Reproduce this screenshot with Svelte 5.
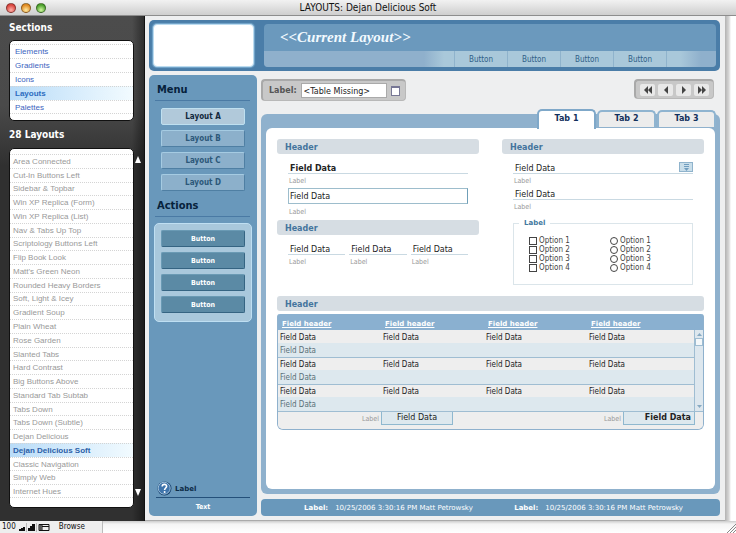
<script>
  const sections = ['Elements', 'Gradients', 'Icons', 'Layouts', 'Palettes'];
  const layouts = [
    'Area Connected', 'Cut-In Buttons Left', 'Sidebar & Topbar', 'Win XP Replica (Form)',
    'Win XP Replica (List)', 'Nav & Tabs Up Top', 'Scriptology Buttons Left', 'Flip Book Look',
    "Matt's Green Neon", 'Rounded Heavy Borders', 'Soft, Light & Icey', 'Gradient Soup',
    'Plain Wheat', 'Rose Garden', 'Slanted Tabs', 'Hard Contrast', 'Big Buttons Above',
    'Standard Tab Subtab', 'Tabs Down', 'Tabs Down (Subtle)', 'Dejan Delicious',
    'Dejan Delicious Soft', 'Classic Navigation', 'Simply Web', 'Internet Hues'
  ];
  const menu = ['Layout A', 'Layout B', 'Layout C', 'Layout D'];
  const four = [1, 2, 3, 4];
  const stamp = '10/25/2006 3:30:16 PM Matt Petrowsky';
  const nav = [
    { name: 'First', d: 'M5 0v8L1 4zM9 0v8L5 4z' },
    { name: 'Previous', d: 'M7 0v8L3 4z' },
    { name: 'Next', d: 'M3 0v8l4-4z' },
    { name: 'Last', d: 'M1 0v8l4-4zM5 0v8l4-4z' }
  ];
  let section = $state('Layouts');
  let layout = $state('Dejan Delicious Soft');
  let menuItem = $state('Layout A');
  let tab = $state(1);
</script>

<div class="window">
  <header class="titlebar">
    <div class="lights"><i class="red"></i><i class="amber"></i><i class="green"></i></div>
    <h1>LAYOUTS: Dejan Delicious Soft</h1>
  </header>

  <div class="work">
    <aside class="library">
      <h2>Sections</h2>
      <nav class="list sections" aria-label="Sections">
        {#each sections as s}
          <a href="#section" class:current={s === section} onclick={() => (section = s)}>{s}</a>
        {/each}
      </nav>
      <h2>28 Layouts</h2>
      <div class="scroller">
        <nav class="list layouts" aria-label="Layouts">
          {#each layouts as l}
            <a href="#layout" class:current={l === layout} onclick={() => (layout = l)}>{l}</a>
          {/each}
        </nav>
        <div class="arrows">
          <button aria-label="Scroll up"><svg width="6" height="7"><path d="M3 0l3 7H0z" fill="#fff" /></svg></button>
          <button aria-label="Scroll down"><svg width="6" height="7"><path d="M3 7l3-7H0z" fill="#fff" /></svg></button>
        </div>
      </div>
    </aside>

    <main class="canvas">
      <header class="banner">
        <div class="logo"></div>
        <div class="heading">
          <h2>&lt;&lt;Current Layout&gt;&gt;</h2>
          <div class="links">
            <div class="strip">
              {#each four as n}<button>Button</button>{/each}
            </div>
          </div>
        </div>
      </header>

      <aside class="side">
        <h3>Menu</h3>
        <div class="stack menu">
          {#each menu as m}
            <button class:current={m === menuItem} onclick={() => (menuItem = m)}>{m}</button>
          {/each}
        </div>
        <h3>Actions</h3>
        <div class="stack actions">
          {#each four as n}<button>Button</button>{/each}
        </div>
        <div class="help">
          <svg width="15" height="15" viewBox="0 0 15 15">
            <circle cx="7.5" cy="7.5" r="7" fill="#14406e" />
            <circle cx="7.2" cy="7.2" r="6" fill="#3f74ab" stroke="#b9d6ea" stroke-width=".8" />
            <path d="M5.2 5.6c0-3 4.6-2.8 4.4-.2-.1 1.600-2 1.700-2 3.500" fill="none" stroke="#fff" stroke-width="1.600" />
            <circle cx="7.600" cy="11" r="1" fill="#fff" />
          </svg>
          <span>Label</span>
        </div>
        <p class="note">Text</p>
      </aside>

      <section class="content">
        <div class="toolbar">
          <div class="well picker">
            <label for="table">Label:</label>
            <input id="table" value="<Table Missing>" />
            <button aria-label="Choose table"></button>
          </div>
          <div class="well pager">
            {#each nav as b}
              <button aria-label={b.name}><svg width="10" height="8" viewBox="0 0 10 8"><path d={b.d} fill="#444" /></svg></button>
            {/each}
          </div>
        </div>

        <div class="tabs" role="tablist">
          {#each [1, 2, 3] as t}
            <button role="tab" aria-selected={tab === t} class:current={tab === t} onclick={() => (tab = t)}>Tab {t}</button>
          {/each}
        </div>

        <div class="frame">
          <div class="sheet">
            <div class="columns">
              <div>
                <h4>Header</h4>
                <div class="fields">
                  <div class="field"><input id="f1" class="strong" value="Field Data" /><label for="f1">Label</label></div>
                  <div class="field boxed"><input id="f2" value="Field Data" /><label for="f2">Label</label></div>
                </div>
                <h4>Header</h4>
                <div class="fields trio">
                  {#each [1, 2, 3] as n}
                    <div class="field"><input id="t{n}" value="Field Data" /><label for="t{n}">Label</label></div>
                  {/each}
                </div>
              </div>
              <div>
                <h4>Header</h4>
                <div class="fields">
                  <div class="field">
                    <div class="combo">
                      <input id="f3" value="Field Data" />
                      <button aria-label="Show values">
                        <svg width="7" height="7" viewBox="0 0 7 7"><path d="M1 .5h5M1 2.500h5" stroke="#6f9dbf" /><path d="M1 4h5L3.500 7z" fill="#6f9dbf" /></svg>
                      </button>
                    </div>
                    <label for="f3">Label</label>
                  </div>
                  <div class="field"><input id="f4" value="Field Data" /><label for="f4">Label</label></div>
                  <fieldset>
                    <legend>Label</legend>
                    <div class="options">
                      {#each four as n}<label><input type="checkbox" />Option {n}</label>{/each}
                    </div>
                    <div class="options">
                      {#each four as n}<label><input type="radio" name="option" />Option {n}</label>{/each}
                    </div>
                  </fieldset>
                </div>
              </div>
            </div>

            <h4 class="wide">Header</h4>
            <div class="portal">
              <table>
                <thead>
                  <tr>{#each four as n}<th><a href="#sort">Field header</a></th>{/each}</tr>
                </thead>
                <tbody>
                  {#each [1, 2, 3] as r}
                    <tr>{#each four as n}<td>Field Data</td>{/each}</tr>
                    <tr class="sub"><td colspan="4">Field Data</td></tr>
                  {/each}
                </tbody>
              </table>
              <div class="bar">
                <button aria-label="Rows up"><svg width="5" height="3"><path d="M0 3h5L2.500 0z" fill="#86a9c2" /></svg></button>
                <i></i>
                <button aria-label="Rows down"><svg width="5" height="3"><path d="M0 0h5L2.500 3z" fill="#86a9c2" /></svg></button>
              </div>
              <div class="totals">
                <label for="sum1">Label</label><input id="sum1" value="Field Data" />
                <label for="sum2">Label</label><input id="sum2" class="strong" value="Field Data" />
              </div>
            </div>
          </div>
        </div>

        <footer class="stamps">
          <span><b>Label:</b>{stamp}</span>
          <span><b>Label:</b>{stamp}</span>
        </footer>
      </section>
    </main>
    <div class="gutter"></div>
  </div>

  <footer class="status">
    <span class="zoom">100</span>
    <svg width="31" height="9" viewBox="0 0 31 9">
      <path d="M0 8V6h2V5h2V4h2v4zM9 8V5h2V3h2V1h3v7z" fill="#111" />
      <path d="M7.500 0v9M17.500 0v9" stroke="#bbb" />
      <path d="M20 1.500h10v6H20zM23 1v7M23 3.500h7" fill="none" stroke="#111" />
      <path d="M20 2h3v5h-3z" fill="#555" />
    </svg>
    <span class="mode">Browse</span>
    <div class="track">
      <svg width="9" height="9"><path d="M0 9L9 0M3 9l6-6M6 9l3-3" stroke="#888" /></svg>
    </div>
  </footer>
</div>

<style>
  :global(body) { background: #fff; }
  .window, .window * { box-sizing: border-box; margin: 0; }
  .window {
    display: flex;
    flex-direction: column;
    min-height: 100vh;
    font: 8px/10px "DejaVu Sans", Verdana, sans-serif;
    color: #222;
  }
  button, input { font: inherit; color: inherit; padding: 0; border: 0; background: none; border-radius: 0; min-width: 0; }
  button { display: flex; align-items: center; justify-content: center; }
  a { color: inherit; text-decoration: none; }
  svg { display: block; flex: none; }

  .titlebar {
    display: grid;
    grid-template-columns: 1fr auto 1fr;
    align-items: center;
    height: 16px;
    padding: 0 6px;
    border-bottom: 1px solid #8d8d8d;
    background: linear-gradient(#f2f2f2, #cecece);
  }
  .titlebar h1 { font: 10px/14px "DejaVu Sans Condensed", "DejaVu Sans", sans-serif; color: #111; }
  .lights { display: flex; gap: 5px; }
  .lights i { width: 10px; height: 10px; border-radius: 50%; border: 1px solid #00000066; }
  .red { background: radial-gradient(circle at 50% 75%, #ffb0a8, #d9463f 70%); }
  .amber { background: radial-gradient(circle at 50% 75%, #ffeaa0, #e08a22 70%); }
  .green { background: radial-gradient(circle at 50% 75%, #d2f8a0, #4ba02c 70%); }

  .work { flex: 1; display: flex; }
  .library {
    width: 145px;
    display: flex;
    flex-direction: column;
    padding: 4px 1px 13px 9px;
    border-right: 1px solid #111;
    background: linear-gradient(90deg, transparent 132px, #0006), linear-gradient(#4c4c4c 0, #4a4a4a 90px, #303030 150px, #303030);
  }
  .library h2 { font: bold 10px/16px "DejaVu Sans Condensed", "DejaVu Sans", sans-serif; color: #fff; }
  .list { width: 125px; display: grid; background: #fff; border: 1px solid #111; border-radius: 5px; font: 8px/10px "Liberation Sans", Arial, sans-serif; }
  .list a { display: flex; align-items: center; padding-top: 1px; border-top: 1px dotted #d4d4d4; }
  .list a:last-child { border-bottom: 1px dotted #d4d4d4; }
  .list .current { font-weight: bold; background: linear-gradient(90deg, #b9dcf8, #f2fbff); }
  .sections { margin: 4px 0 6px; padding: 3px 0 6px; grid-auto-rows: 14px; color: #3c64c0; }
  .sections a { padding-left: 5px; }
  .sections .current { color: #2c6cc0; }
  .scroller { flex: 1; display: flex; margin-top: 5px; gap: 1px; }
  .layouts { grid-auto-rows: 1fr; padding: 5px 0 9px; color: #999; }
  .layouts a { padding-left: 3px; }
  .layouts .current { color: #2c5fa8; }
  .arrows { display: flex; flex-direction: column; justify-content: space-between; padding: 8px 0 12px; }

  .canvas {
    flex: 1;
    min-width: 0;
    display: grid;
    grid-template-columns: 108px 1fr;
    grid-template-rows: 51px 1fr;
    gap: 4px;
    padding: 4px 5px 4px 4px;
    background: #eeeff0;
    border-bottom: 1px solid #aaa;
  }
  .gutter { width: 11px; background: linear-gradient(90deg, #b2b2b2, #d8d8d8 4px, #fff 6px); }

  .banner { grid-column: 1 / -1; display: flex; gap: 10px; padding: 4px; background: #4a7da8; border-radius: 5px; }
  .logo { width: 101px; background: #fff; border: 1px solid #bcdcf0; border-radius: 4px; box-shadow: 0 0 1px 1px #76a8cc; }
  .heading { flex: 1; display: flex; flex-direction: column; border-radius: 4px; overflow: hidden; background: #6b99bd; }
  .heading h2 { flex: 1; padding-left: 16px; font: italic bold 15px/27px "Liberation Serif", "Times New Roman", serif; color: #f2faff; }
  .links { display: flex; justify-content: flex-end; height: 18px; padding-right: 15px; background: #8fb0cc; }
  .strip { display: flex; padding: 0 34px 0 30px; background: linear-gradient(90deg, #8fb0cc, #a9c8da 20px, #a9c8da 256px, #8fb0cc); }
  .strip button { width: 53px; padding-top: 1px; border-left: 1px solid #8fb3cc; font: 8px/10px "DejaVu Sans Condensed", "DejaVu Sans", sans-serif; color: #2f5f88; }
  .strip button:last-child { width: 54px; border-right: 1px solid #8fb3cc; }

  .side { display: flex; flex-direction: column; padding: 7px 5px 4px; background: #6998bb; border-radius: 5px; }
  .side h3 { margin: 0 2px 0 1px; padding: 0 2px 2px; border-bottom: 1px solid #4a7aa4; font: bold 11px/16px "DejaVu Sans Condensed", "DejaVu Sans", sans-serif; color: #06223c; }
  .stack { display: flex; flex-direction: column; gap: 5px; padding: 7px; font: bold 8px/10px "DejaVu Sans Condensed", "DejaVu Sans", sans-serif; }
  .stack button { height: 17px; border-radius: 2px; }
  .menu button { background: #8cb0cb; color: #2d5879; border: 1px solid #a5cbe2; border-right-color: #4f7fa3; border-bottom-color: #4f7fa3; }
  .menu .current { background: #b1c9da; border-color: #bfe0f0; color: #12283c; }
  .actions { margin-top: 6px; padding: 6px 6px 8px; background: #a9c8dc; border: 1px solid #bfdff2; border-radius: 5px; }
  .actions button { background: #5b8aa5; color: #fff; font-size: 7px; border: 1px solid #6a9ab4; border-right-color: #356482; border-bottom-color: #356482; }
  .help { display: flex; align-items: center; gap: 3px; margin: auto 2px 0 2px; padding: 0 1px 1px; border-bottom: 1px solid #24507a; font: bold 7px/10px "DejaVu Sans", sans-serif; color: #0c2b48; }
  .note { padding-top: 4px; text-align: center; font: bold 7px/10px "DejaVu Sans Condensed", "DejaVu Sans", sans-serif; color: #fff; }

  .content { display: flex; flex-direction: column; min-width: 0; }
  .toolbar { display: flex; justify-content: space-between; align-items: flex-start; margin: 4px 6px 0 0; }
  .well { display: flex; align-items: center; background: #c8c8c8; border: 1px solid #b8b8b8; border-top: 2px solid #a9a9a9; border-left: 2px solid #a9a9a9; border-radius: 4px; }
  .picker { height: 22px; width: 145px; padding: 0 5px; gap: 4px; }
  .picker label { padding: 1px 0 0 1px; font-weight: bold; color: #555; }
  .picker input { flex: 1; height: 15px; padding: 1px 0 0 2px; background: #fff; border: 1px solid #aaa; }
  .picker button { width: 9px; height: 10px; background: #fff; border: 1px solid #777795; border-top-width: 2px; }
  .pager { height: 20px; padding: 0 4px; gap: 3px; }
  .pager button { width: 15px; height: 12px; background: #e8e8e8; border-radius: 2px; }

  .tabs { display: flex; justify-content: flex-end; align-items: flex-end; height: 27px; padding-right: 4px; gap: 1px; z-index: 1; margin-bottom: -19px; position: relative; align-self: flex-end; }
  .tabs button { width: 59px; height: 17px; margin-bottom: 1px; padding-bottom: 1px; background: #ececec; border: 2px solid #8fb4d0; border-bottom: 0; border-radius: 5px 5px 0 0; font-weight: bold; color: #12305c; }
  .tabs .current { height: 20px; margin-bottom: -1px; padding-bottom: 3px; background: #fff; border-color: #7fa8c9; }
  .frame { flex: 1; display: flex; margin-top: 5px; padding: 14px 5px 5px; background: #8fb1cd; border-radius: 6px; }
  .sheet { flex: 1; min-width: 0; padding: 11px; background: #fff; border-radius: 6px; }

  .columns { display: grid; grid-template-columns: 1fr 1fr; gap: 23px; height: 157px; }
  h4 { height: 15px; padding-left: 8px; font: bold 8px/17px "DejaVu Sans", sans-serif; color: #44749d; background: #d6dde3; border-radius: 3px; }
  .fields { padding: 8px 11px 0; }
  .field { display: flex; flex-direction: column; }
  .field input { width: 100%; height: 12px; padding: 1px 0 0 2px; border-bottom: 1px solid #c9d9e2; }
  .strong { font-weight: bold; }
  .field label, .totals label { font: 7px/8px "DejaVu Sans Condensed", "DejaVu Sans", sans-serif; color: #999; }
  .field label { padding: 3px 1px 2px; height: 14px; }
  .boxed input { height: 16px; padding-left: 1px; border: 1px solid #9dbdcc; border-right-color: #6f9fb8; }
  .boxed label { padding-top: 4px; height: 16px; }
  .trio { display: grid; grid-template-columns: repeat(3, 1fr); gap: 4px; }
  .combo { display: flex; position: relative; }
  .combo button { position: absolute; right: 0; top: 0; width: 14px; height: 10px; background: #c9deea; border: 1px solid #8fb3cc; }
  .fields fieldset { display: grid; grid-template-columns: 81px 1fr; margin-top: 4px; min-width: 0; height: 67px; padding: 8px 10px 0 5px; border: 1px solid #dbe5ea; }
  legend { padding: 0 5px; font: bold 7px/10px "DejaVu Sans", sans-serif; color: #44799f; }
  .options { padding-left: 10px; }
  .options label { display: flex; align-items: center; gap: 2px; height: 9px; font: 8px/9px "DejaVu Sans Condensed", "DejaVu Sans", sans-serif; color: #444; }
  .options input { appearance: none; width: 8px; height: 8px; margin: 0; border: 1px solid #444; background: #fff; }
  .options [type='radio'] { border-radius: 50%; }
  .options input:checked { box-shadow: inset 0 0 0 1px #fff; background: #444; }

  .wide { margin-bottom: 3px; }
  .portal { display: grid; grid-template-columns: 1fr 9px; grid-template-rows: auto 17px; border: 1px solid #8fb1cd; border-top: 0; border-radius: 3px 3px 6px 6px; background: linear-gradient(#8ab0d0 17px, #eee 17px); overflow: hidden; }
  table { table-layout: fixed; width: 100%; border-collapse: collapse; font: 8px/10px "DejaVu Sans Condensed", "DejaVu Sans", sans-serif; }
  th { height: 16px; padding: 4px 0 0 4px; text-align: left; font: bold 7px/8px "DejaVu Sans", sans-serif; color: #fff; }
  th:not(:last-child) { width: 103px; }
  th a { text-decoration: underline; }
  td { height: 13px; padding: 2px 0 0 2px; background: #eee; }
  .sub td { height: 14px; background: #dde8ee; color: #5a7078; border-bottom: 1px solid #9fbdd2; }
  .bar { display: flex; flex-direction: column; margin-top: 16px; background: #dde7ee; border-left: 1px solid #9fbdd2; border-bottom: 1px solid #9fbdd2; }
  .bar button { height: 8px; }
  .bar i { height: 8px; margin-bottom: auto; background: #f4f8fa; border: 1px solid #9fbdd2; }
  .totals { grid-column: 1 / -1; display: grid; grid-template-columns: 103px 72px 1fr 72px; align-items: start; padding-right: 8px; background: #eee; }
  .totals label { padding: 3px 2px 0 0; text-align: right; }
  .totals input { width: 100%; height: 13px; text-align: center; background: #dde8ee; border: 1px solid #8fb8cf; border-top: 0; }
  .totals .strong { text-align: right; padding-right: 3px; }

  .stamps { display: flex; justify-content: space-between; margin-top: 5px; height: 17px; padding: 1px 37px 0 43px; align-items: center; background: #6998bb; border-radius: 4px; font-size: 7px; color: #fff; white-space: nowrap; }
  .stamps b { margin-right: 7px; }

  .status { display: flex; align-items: center; height: 12px; padding-left: 2px; gap: 3px; background: #eee; font: 8px/10px "DejaVu Sans Condensed", "DejaVu Sans", sans-serif; color: #111; }
  .mode { padding: 0 14px 0 6px; }
  .track { flex: 1; display: flex; justify-content: flex-end; align-items: flex-end; height: 12px; border-left: 1px solid #bbb; background: linear-gradient(#ccc, #f4f4f4 3px, #fff); }
</style>
